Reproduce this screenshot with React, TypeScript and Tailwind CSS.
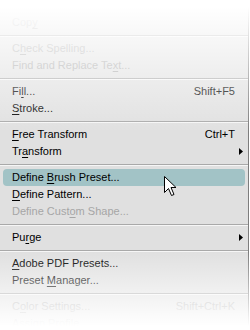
type Item =
  | { sep: true }
  | {
      sep?: false;
      label: string;
      shortcut?: string;
      sub?: boolean;
      disabled?: boolean;
      active?: boolean;
    };

const items: Item[] = [
  { label: "Cop&y", disabled: true },
  { sep: true },
  { label: "C&heck Spelling...", disabled: true },
  { label: "Find and Replace Te&xt...", disabled: true },
  { sep: true },
  { label: "Fi&ll...", shortcut: "Shift+F5" },
  { label: "&Stroke..." },
  { sep: true },
  { label: "&Free Transform", shortcut: "Ctrl+T" },
  { label: "Tr&ansform", sub: true },
  { sep: true },
  { label: "Define &Brush Preset...", active: true },
  { label: "&Define Pattern..." },
  { label: "Define Cust&om Shape...", disabled: true },
  { sep: true },
  { label: "Pu&rge", sub: true },
  { sep: true },
  { label: "&Adobe PDF Presets..." },
  { label: "Preset &Manager..." },
  { sep: true },
  { label: "C&olor Settings...", shortcut: "Shift+Ctrl+K", disabled: true },
  { label: "Assi&gn Profile...", disabled: true },
];

// "&" marks the mnemonic letter
const Label = ({ text }: { text: string }) => {
  const i = text.indexOf("&");
  if (i < 0) return <>{text}</>;
  return (
    <>
      {text.slice(0, i)}
      <span className="underline underline-offset-[2px] decoration-1">{text[i + 1]}</span>
      {text.slice(i + 2)}
    </>
  );
};

const Cursor = () => (
  <svg width="13" height="21" viewBox="0 0 13 21" className="absolute left-[164px] top-[176px]">
    <path
      d="M0.5 0.5 L0.5 16.5 L4.5 12.5 L7.5 19.5 L10 18.5 L7 11.5 L12 11.5 Z"
      fill="#fff"
      stroke="#000"
      strokeWidth="1"
      strokeLinejoin="miter"
    />
  </svg>
);

export default function App() {
  return (
    <div className="relative w-[250px] h-[330px] overflow-hidden bg-white font-['Liberation_Sans',Arial,sans-serif] text-[11px]">
      <div className="w-[249px] h-full bg-[#e0e0e0] border-r border-[#7d7d7d] pt-[14px]">
        {items.map((it, idx) =>
          it.sep ? (
            <div key={idx} className="h-[9px] flex flex-col justify-center">
              <div className="h-px bg-[#a9a9a9]" />
              <div className="h-px bg-[#f6f6f6]" />
            </div>
          ) : (
            <div key={idx} className="px-[3px]">
              <div
                className={`h-[17px] flex items-center pl-[9px] pr-[2px] rounded-[4px] ${
                  it.active ? "bg-[#a2c3c6]" : ""
                } ${it.disabled ? "text-[#a6a6a6]" : "text-black"}`}
              >
                <span className="flex-1 whitespace-nowrap">
                  <Label text={it.label} />
                </span>
                {it.shortcut && <span className="whitespace-nowrap">{it.shortcut}</span>}
                <span className="w-[8px] flex justify-end">
                  {it.sub && (
                    <svg width="4" height="7" viewBox="0 0 4 7">
                      <path d="M0 0 L4 3.5 L0 7 Z" fill="#000" />
                    </svg>
                  )}
                </span>
              </div>
            </div>
          )
        )}
      </div>
      <Cursor />
      {/* fade top and bottom */}
      <div className="absolute inset-x-0 top-0 h-[132px] bg-gradient-to-b from-white from-5% to-transparent pointer-events-none" />
      <div className="absolute inset-x-0 bottom-0 h-[78px] bg-gradient-to-t from-white from-5% to-transparent pointer-events-none" />
    </div>
  );
}
